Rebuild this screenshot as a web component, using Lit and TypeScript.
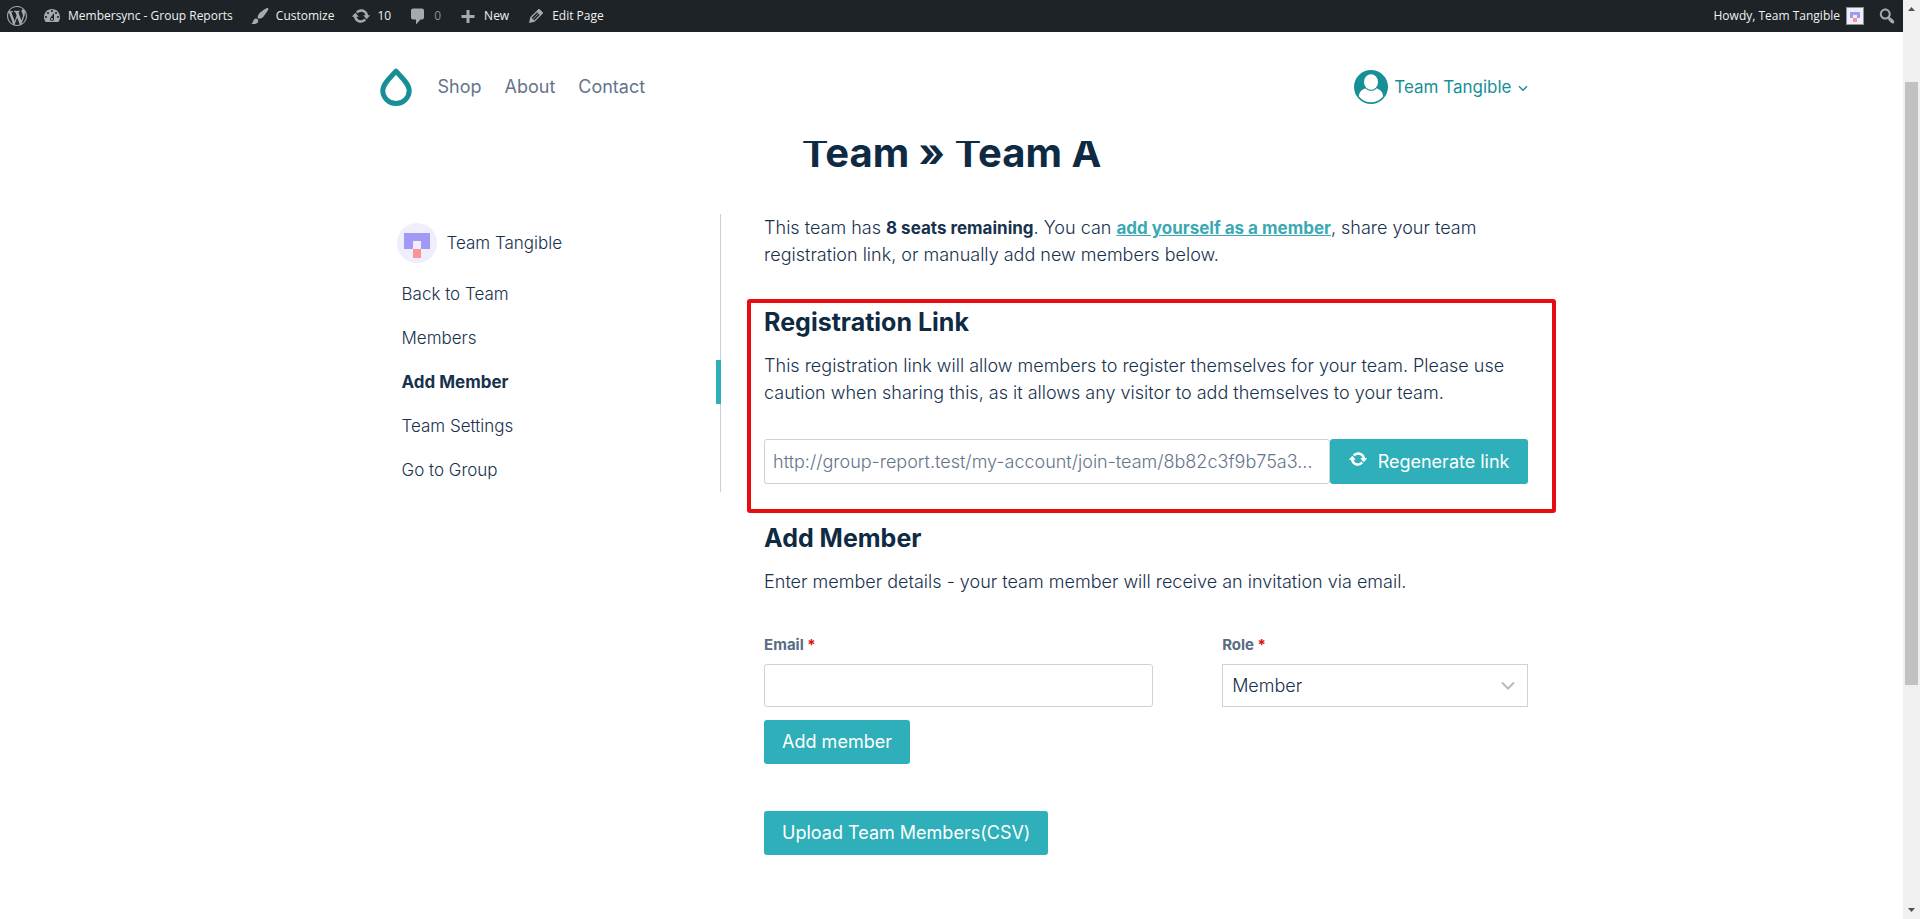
import { LitElement, html, css } from "lit";
import { customElement, property, state } from "lit/decorators.js";
import { classMap } from "lit/directives/class-map.js";

const ICONS: Record<string, string> = {
  wordpress:
    "M20 10c0-5.51-4.49-10-10-10S0 4.48 0 10c0 5.51 4.49 10 10 10s10-4.49 10-10zM7.78 15.37L4.37 6.22c.55-.02 1.17-.08 1.17-.08.5-.06.44-1.13-.06-1.11 0 0-1.45.11-2.37.11-.18 0-.37 0-.58-.01C4.12 2.69 6.87 1.11 10 1.11c2.33 0 4.45.87 6.05 2.34-.68-.11-1.65.39-1.65 1.58 0 .74.45 1.36.9 2.1.35.61.55 1.36.55 2.46 0 1.49-1.4 5-1.4 5l-3.03-8.37c.54-.02.82-.17.82-.17.5-.05.44-1.25-.06-1.22 0 0-1.44.12-2.38.12-.87 0-2.33-.12-2.33-.12-.5-.03-.56 1.2-.06 1.22l.92.08 1.26 3.41zM17.41 10c.24-.64.74-1.87.43-4.25.7 1.29 1.05 2.71 1.05 4.25 0 3.29-1.73 6.24-4.4 7.78.97-2.59 1.94-5.2 2.92-7.78zM6.1 18.09C3.12 16.65 1.11 13.53 1.11 10c0-1.3.23-2.48.72-3.59C3.25 10.3 4.67 14.2 6.1 18.09zm4.03-6.63l2.58 6.98c-.86.29-1.76.45-2.71.45-.79 0-1.57-.11-2.29-.33.81-2.38 1.62-4.74 2.42-7.1z",
  dashboard:
    "M3.76 16h12.48c1.1-1.37 1.76-3.11 1.76-5 0-4.42-3.58-8-8-8s-8 3.58-8 8c0 1.89.66 3.63 1.76 5zM10 4c.55 0 1 .45 1 1s-.45 1-1 1-1-.45-1-1 .45-1 1-1zM6 6c.55 0 1 .45 1 1s-.45 1-1 1-1-.45-1-1 .45-1 1-1zm8 0c.55 0 1 .45 1 1s-.45 1-1 1-1-.45-1-1 .45-1 1-1zm-5.37 5.55L12 7v6c0 1.1-.9 2-2 2s-2-.9-2-2c0-.57.24-1.08.63-1.45zM4 10c.55 0 1 .45 1 1s-.45 1-1 1-1-.45-1-1 .45-1 1-1zm12 0c.55 0 1 .45 1 1s-.45 1-1 1-1-.45-1-1 .45-1 1-1zm-5 3c0-.55-.45-1-1-1s-1 .45-1 1 .45 1 1 1 1-.45 1-1z",
  brush:
    "M18.33 3.57s.27-.8-.31-1.36c-.53-.52-1.22-.24-1.22-.24-.61.3-5.76 3.47-7.67 5.57-.86.96-2.06 3.79-1.09 4.82.92.98 3.96-.17 4.79-1 2.06-2.06 5.21-7.17 5.5-7.79zM1.4 17.65c2.37-1.56 1.46-3.41 3.23-4.64.93-.65 2.22-.62 3.08.29.63.67.8 2.57-.16 3.46-1.57 1.45-4 1.55-6.15.89z",
  update:
    "M10.2 3.28c3.53 0 6.43 2.61 6.92 6h2.08l-3.5 4-3.5-4h2.32c-.45-1.97-2.21-3.45-4.32-3.45-1.45 0-2.73.71-3.54 1.78L4.95 5.66C6.23 4.2 8.11 3.28 10.2 3.28zm-.4 13.44c-3.52 0-6.43-2.61-6.92-6H.8l3.5-4c1.17 1.33 2.33 2.67 3.5 4H5.48c.45 1.97 2.21 3.45 4.32 3.45 1.45 0 2.73-.71 3.54-1.78l1.71 1.95c-1.28 1.46-3.15 2.38-5.25 2.38z",
  comment:
    "M5 2.5h9c1.1 0 2 .9 2 2v7c0 1.1-.9 2-2 2h-1.500l-4.500 5v-5H5c-1.1 0-2-.9-2-2v-7c0-1.100.9-2 2-2z",
  plus: "M8.500 4h3v5h5v3h-5v5h-3v-5h-5v-3h5z",
  edit:
    "M13.89 3.39l2.71 2.72c.46.46.42 1.24.03 1.64l-8.01 8.02-5.56 1.16 1.16-5.58s7.6-7.63 7.99-8.03c.39-.39 1.22-.39 1.68.07zm-2.73 2.79l-5.59 5.61 1.11 1.11 5.54-5.65zm-2.97 8.23l5.58-5.6-1.07-1.08-5.59 5.6z",
  search:
    "M12.14 4.18c1.87 1.87 2.11 4.75.72 6.89.12.1.22.21.36.31.2.16.47.36.81.59.34.24.56.39.66.47.42.31.73.57.94.78.32.32.6.65.84 1 .25.35.44.69.59 1.04.14.35.21.68.18 1-.02.32-.14.59-.36.81s-.49.34-.81.36c-.31.02-.65-.04-.99-.19-.35-.14-.7-.34-1.04-.59-.35-.24-.68-.52-1-.84-.21-.21-.47-.52-.77-.93-.1-.13-.25-.35-.47-.66-.22-.32-.4-.57-.56-.78-.16-.2-.29-.35-.44-.5-2.07 1.09-4.69.76-6.44-.98-2.14-2.15-2.14-5.64 0-7.78 2.15-2.15 5.63-2.15 7.78 0zm-1.41 6.36c1.36-1.37 1.36-3.58 0-4.95-1.37-1.37-3.59-1.37-4.95 0-1.37 1.37-1.37 3.58 0 4.95 1.36 1.37 3.58 1.37 4.95 0z",
};

@customElement("dash-icon")
class DashIcon extends LitElement {
  @property() name = "wordpress";
  @property({ type: Number }) size = 20;

  static styles = css`
    :host {
      display: inline-flex;
      flex: none;
    }
  `;

  render() {
    return html`<svg width=${this.size} height=${this.size} viewBox="0 0 20 20" aria-hidden="true">
      <path d=${ICONS[this.name]} fill="currentColor"></path>
    </svg>`;
  }
}

@customElement("team-avatar")
class TeamAvatar extends LitElement {
  static styles = css`
    :host {
      display: block;
      flex: none;
      overflow: hidden;
      background: #f0eefc;
    }
    .art {
      display: block;
      width: 100%;
      height: 100%;
    }
  `;

  render() {
    return html`<svg class="art" viewBox="0 0 40 40" shape-rendering="crispEdges" aria-hidden="true">
      <path d="M7 10h26v16h-9v-8h-8v8H7z" fill="#a09af5"></path>
      <path d="M16 26h8v9h-8z" fill="#fb9499"></path>
    </svg>`;
  }
}

@customElement("admin-bar")
class AdminBar extends LitElement {
  static styles = css`
    :host {
      display: flex;
      justify-content: space-between;
      height: 32px;
      background: #1d2327;
      color: #f0f0f1;
      font: 400 12px/32px "Open Sans", "Noto Sans", sans-serif;
    }
    .group {
      display: flex;
    }
    .item {
      display: flex;
      align-items: center;
      gap: 6px;
      padding: 0 9px 0 8px;
      color: inherit;
      text-decoration: none;
      white-space: nowrap;
    }
    .logo {
      padding: 0 7px;
    }
    dash-icon {
      color: #a7aaad;
    }
    .muted {
      color: #8c8f94;
    }
    team-avatar {
      width: 16px;
      height: 16px;
      border: 1px solid #8c8f94;
    }
    .search {
      padding: 0 6px 0 4px;
    }
  `;

  render() {
    return html`
      <div class="group">
        <a class="item logo" href="#" aria-label="About WordPress"><dash-icon name="wordpress"></dash-icon></a>
        <a class="item" href="#"><dash-icon name="dashboard"></dash-icon>Membersync - Group Reports</a>
        <a class="item" href="#"><dash-icon name="brush"></dash-icon>Customize</a>
        <a class="item" href="#"><dash-icon name="update"></dash-icon>10</a>
        <a class="item muted" href="#"><dash-icon name="comment"></dash-icon>0</a>
        <a class="item" href="#"><dash-icon name="plus"></dash-icon>New</a>
        <a class="item" href="#"><dash-icon name="edit"></dash-icon>Edit Page</a>
      </div>
      <div class="group">
        <a class="item" href="#">Howdy, Team Tangible<team-avatar></team-avatar></a>
        <a class="item search" href="#" aria-label="Search"><dash-icon name="search"></dash-icon></a>
      </div>
    `;
  }
}

@customElement("site-header")
class SiteHeader extends LitElement {
  static styles = css`
    :host {
      display: block;
      position: relative;
      z-index: 1;
      background: #fff;
    }
    .inner {
      display: flex;
      align-items: center;
      box-sizing: border-box;
      max-width: 1152px;
      height: 109px;
      margin: 0 auto;
      padding-left: 4px;
    }
    .brand {
      display: flex;
      margin-right: 26px;
    }
    .nav {
      display: flex;
      gap: 23px;
      flex: 1;
    }
    .link {
      color: #65748b;
      font-size: 18px;
      text-decoration: none;
    }
    .account {
      display: flex;
      align-items: center;
      gap: 6px;
      color: #178f96;
      font-size: 17px;
      font-weight: 400;
      text-decoration: none;
    }
    .caret {
      margin-top: 4px;
    }
  `;

  render() {
    return html`
      <div class="inner">
        <a class="brand" href="#" aria-label="Home">
          <svg width="32" height="38" viewBox="0 0 32 38" aria-hidden="true">
            <path
              d="M16 3.200C11 9 2.800 15.500 2.800 22.500A13.200 13 0 0 0 29.200 22.500C29.200 15.500 21 9 16 3.200Z"
              fill="none"
              stroke="#178f96"
              stroke-width="5"
              stroke-linejoin="round"
            ></path>
          </svg>
        </a>
        <nav class="nav">
          ${["Shop", "About", "Contact"].map((t) => html`<a class="link" href="#">${t}</a>`)}
        </nav>
        <a class="account" href="#">
          <svg width="34" height="34" viewBox="0 0 34 34" aria-hidden="true">
            <circle cx="17" cy="17" r="17" fill="#178f96"></circle>
            <path
              d="M4.800 26.200C5.300 21.800 8 19.200 11.600 18.500 13 20 15 20.800 17 20.800 19 20.800 21 20 22.400 18.500 26 19.200 28.700 21.800 29.200 26.200A15.200 15.200 0 0 1 4.800 26.200Z"
              fill="#fff"
            ></path>
            <ellipse cx="17" cy="12" rx="7" ry="7.700" fill="#fff"></ellipse>
          </svg>
          Team Tangible
          <svg class="caret" width="10" height="7" viewBox="0 0 10 7" aria-hidden="true">
            <path d="M1 1.200L5 5.200 9 1.200" fill="none" stroke="currentColor" stroke-width="1.400"></path>
          </svg>
        </a>
      </div>
    `;
  }
}

@customElement("team-nav")
class TeamNav extends LitElement {
  @state() private current = "Add Member";

  static styles = css`
    :host {
      display: block;
      align-self: start;
      box-shadow: inset -1px 0 0 #c8d0d9;
      font-size: 17px;
      font-weight: 300;
    }
    .user {
      display: flex;
      align-items: center;
      gap: 10px;
      padding: 9px 0 9px 21px;
    }
    team-avatar {
      width: 40px;
      height: 40px;
      border-radius: 50%;
    }
    .link {
      display: block;
      padding-left: 26px;
      color: inherit;
      line-height: 44px;
      text-decoration: none;
    }
    .active {
      border-right: 5px solid #2eafb9;
      font-weight: 700;
    }
  `;

  render() {
    const links = ["Back to Team", "Members", "Add Member", "Team Settings", "Go to Group"];
    return html`
      <div class="user"><team-avatar></team-avatar>Team Tangible</div>
      <nav>
        ${links.map(
          (label) => html`<a
            class=${classMap({ link: true, active: label === this.current })}
            href="#"
            @click=${() => (this.current = label)}
            >${label}</a
          >`
        )}
      </nav>
    `;
  }
}

@customElement("page-scrollbar")
class PageScrollbar extends LitElement {
  static styles = css`
    :host {
      display: flex;
      flex-direction: column;
      position: sticky;
      top: 0;
      flex: none;
      width: 17px;
      height: 100vh;
      background: #f0f0f0;
    }
    .arrow {
      display: block;
      height: 17px;
    }
    .before {
      flex: 65;
    }
    .thumb {
      flex: 603;
      margin: 0 2px;
      background: #c1c1c1;
    }
    .after {
      flex: 217;
    }
  `;

  render() {
    return html`
      <svg class="arrow" viewBox="0 0 17 17"><path d="M5 11L8.500 7 12 11z" fill="#505050"></path></svg>
      <div class="before"></div>
      <div class="thumb"></div>
      <div class="after"></div>
      <svg class="arrow" viewBox="0 0 17 17"><path d="M5 6L8.500 10 12 6z" fill="#505050"></path></svg>
    `;
  }
}

@customElement("app-root")
class AppRoot extends LitElement {
  static styles = css`
    :host {
      display: flex;
      align-items: flex-start;
      min-height: 100vh;
      background: #fff;
      color: #17324d;
      font-family: Inter, "Noto Sans", sans-serif;
    }
    .page {
      flex: 1;
      min-width: 0;
    }
    .title {
      margin: -8px 0 41px;
      color: #0f2a43;
      font-size: 40px;
      font-weight: 700;
      line-height: 40px;
      text-align: center;
    }
    .layout {
      display: grid;
      grid-template-columns: 30% 1fr;
      gap: 43px;
      max-width: 1152px;
      margin: 0 auto;
    }
    .text {
      margin: 0;
      font-size: 18px;
      font-weight: 300;
      line-height: 27px;
    }
    .accent,
    .strong {
      font-size: 17px;
      font-weight: 700;
      line-height: 1;
    }
    .accent {
      color: #3aa9b3;
    }
    .heading {
      margin: 0 0 14px;
      color: #0f2a43;
      font-size: 25px;
      font-weight: 700;
      line-height: 32px;
    }
    .highlight {
      margin: 31px -28px 9px -17px;
      padding: 3px 24px 25px 13px;
      border: 4px solid #e60c0f;
      border-radius: 3px;
    }
    .link-row {
      display: flex;
      margin-top: 33px;
    }
    .field {
      box-sizing: border-box;
      width: 100%;
      min-width: 0;
      height: 43px;
      margin: 0;
      padding: 0 9px;
      border: 1px solid #cbd2d9;
      border-radius: 3px;
      background: #fff;
      color: #17324d;
      font: 300 18px/24px Inter, "Noto Sans", sans-serif;
      outline: none;
    }
    .url {
      flex: 1;
      height: 45px;
      padding: 0 8px;
      color: #65748b;
      text-overflow: ellipsis;
    }
    .btn {
      display: inline-flex;
      align-items: center;
      gap: 10px;
      height: 44px;
      padding: 0 18px;
      border: 0;
      border-radius: 3px;
      background: #2eafb9;
      color: #fff;
      font: 400 18px/24px Inter, "Noto Sans", sans-serif;
      white-space: nowrap;
    }
    .regenerate {
      height: 45px;
    }
    .regenerate dash-icon {
      margin-bottom: 6px;
    }
    .form {
      display: grid;
      grid-template-columns: 51% 40%;
      justify-content: space-between;
      margin: 39px 0 13px;
    }
    .label {
      display: block;
      margin-bottom: 8px;
      color: #5a6b82;
      font-size: 15px;
      font-weight: 700;
      line-height: 22px;
    }
    .required {
      color: #e60c0f;
    }
    .select-box {
      display: grid;
      align-items: center;
    }
    .select-box > * {
      grid-area: 1 / 1;
    }
    .select {
      border-radius: 0;
      appearance: none;
    }
    .chevron {
      justify-self: end;
      margin-right: 12px;
      pointer-events: none;
    }
    .upload {
      margin-top: 47px;
    }
  `;

  render() {
    return html`
      <div class="page">
        <admin-bar></admin-bar>
        <site-header></site-header>
        <h1 class="title">Team » Team A</h1>
        <div class="layout">
          <team-nav></team-nav>
          <main>
            <p class="text">
              This team has <b class="strong">8 seats remaining</b>. You can
              <a class="accent" href="#">add yourself as a member</a>, share your team registration link, or manually
              add new members below.
            </p>
            <section class="highlight">
              <h2 class="heading">Registration Link</h2>
              <p class="text">
                This registration link will allow members to register themselves for your team. Please use caution when
                sharing this, as it allows any visitor to add themselves to your team.
              </p>
              <div class="link-row">
                <input
                  class="field url"
                  type="text"
                  readonly
                  aria-label="Registration link"
                  value="http://group-report.test/my-account/join-team/8b82c3f9b75a3..."
                />
                <button class="btn regenerate" type="button">
                  <dash-icon name="update"></dash-icon>Regenerate link
                </button>
              </div>
            </section>
            <h2 class="heading">Add Member</h2>
            <p class="text">Enter member details - your team member will receive an invitation via email.</p>
            <form @submit=${(e: Event) => e.preventDefault()}>
              <div class="form">
                <div>
                  <label class="label" for="email">Email <span class="required">*</span></label>
                  <input class="field" id="email" type="email" />
                </div>
                <div>
                  <label class="label" for="role">Role <span class="required">*</span></label>
                  <div class="select-box">
                    <select class="field select" id="role">
                      <option>Member</option>
                      <option>Manager</option>
                    </select>
                    <svg class="chevron" width="16" height="10" viewBox="0 0 16 10" aria-hidden="true">
                      <path d="M2 1.500L8 7.500 14 1.500" fill="none" stroke="#bbb" stroke-width="2"></path>
                    </svg>
                  </div>
                </div>
              </div>
              <button class="btn" type="submit">Add member</button>
            </form>
            <button class="btn upload" type="button">Upload Team Members(CSV)</button>
          </main>
        </div>
      </div>
      <page-scrollbar></page-scrollbar>
    `;
  }
}
